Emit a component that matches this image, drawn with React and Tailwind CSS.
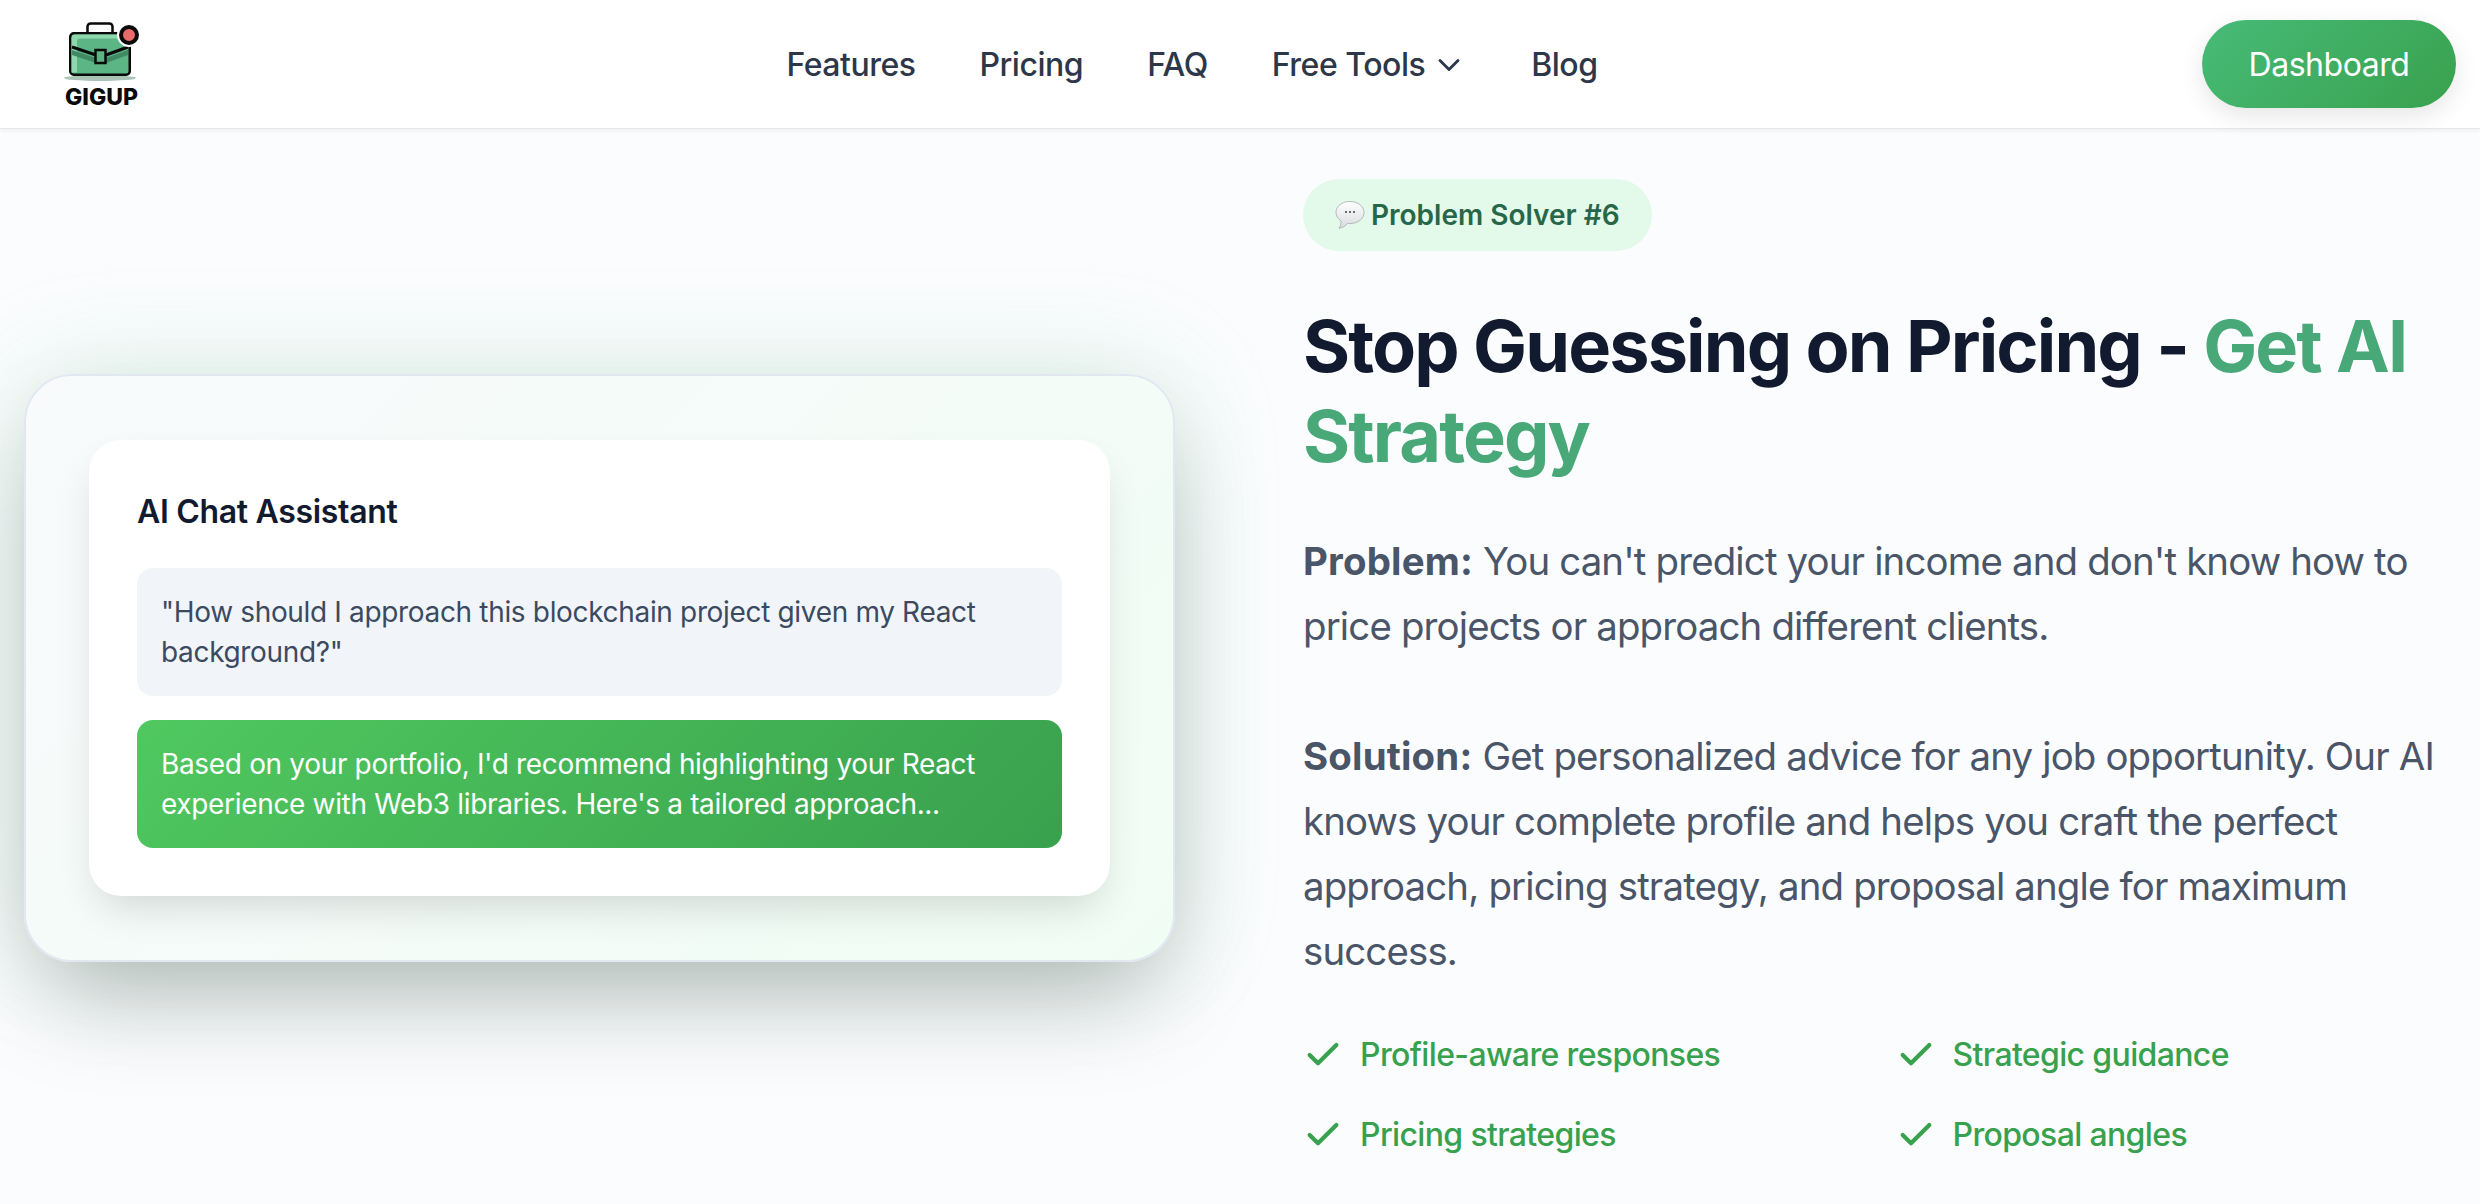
import React from "react";
import { Check, ChevronDown } from "lucide-react";

function Logo() {
  return (
    <div className="flex w-[158px] flex-col items-center pr-[3px]">
      <svg width="80" height="64" viewBox="0 0 80 64" className="block">
        <ellipse cx="38" cy="59" rx="36" ry="3" fill="#a9c4b6" />
        <rect x="25.5" y="4.5" width="25" height="12" rx="3" fill="#fff" stroke="#0a0a0a" strokeWidth="2.5" />
        <rect x="8.25" y="14.25" width="59.5" height="41.5" rx="3.5" fill="#5cb585" stroke="#0a0a0a" strokeWidth="2.5" />
        <path d="M9.5 19q0-3.5 3.5-3.5h53v4H18q-3 0-3 3v31h-5.5z" fill="#8fd8ae" />
        <path d="M10 31l24 8h10l22-8v5l-22 8H34l-24-8z" fill="#3f8a63" />
        <path d="M10 28l24 8M44 36l22-8" stroke="#0a0a0a" strokeWidth="3" fill="none" />
        <rect x="33.5" y="31" width="10" height="13" fill="#5cb585" stroke="#0a0a0a" strokeWidth="2.5" />
        <circle cx="67" cy="16" r="12" fill="#fff" />
        <circle cx="67" cy="16" r="8" fill="#e86a6a" stroke="#0a0a0a" strokeWidth="4" />
      </svg>
      <span className="mt-[1px] text-[23px] font-extrabold leading-[26px] text-[#0a0a0a]">GIGUP</span>
    </div>
  );
}

function Bubble() {
  return (
    <svg width="30" height="30" viewBox="0 0 30 30" className="mr-[6px] shrink-0">
      <defs>
        <linearGradient id="bubble" x1="0" y1="0" x2="0" y2="1">
          <stop offset="0" stopColor="#ffffff" />
          <stop offset="1" stopColor="#d9dbde" />
        </linearGradient>
      </defs>
      <path d="M15 1.5C7 1.5 1 6.3 1 12.5c0 3.5 2 6.4 5 8.4.2 2.2-.4 5-2 7.3 3.6-.3 6.8-2.4 8.6-4.9.8.1 1.6.2 2.4.2 8 0 14-4.8 14-11S23 1.5 15 1.5z" fill="url(#bubble)" stroke="#a8abb0" strokeWidth="0.8" />
      <circle cx="11" cy="12" r="1" fill="#3a3d42" />
      <circle cx="15" cy="12" r="1" fill="#3a3d42" />
      <circle cx="19" cy="12" r="1" fill="#3a3d42" />
    </svg>
  );
}

function Feature({ children }) {
  return (
    <div className="flex items-center gap-[17px] text-[32px] font-medium leading-[48px] tracking-[-0.02em] text-[#38a14d]">
      <Check size={40} strokeWidth={2.5} className="shrink-0" />
      <span>{children}</span>
    </div>
  );
}

export default function App() {
  return (
    <div className="h-[1204px] overflow-hidden bg-[#fbfcfe] font-['Inter',sans-serif]">
      <header className="flex h-[129px] items-center justify-between border-b border-[#e5e7eb] bg-white px-6 shadow-[0_2px_4px_rgba(0,0,0,0.05)]">
        <Logo />
        <nav className="flex items-center gap-16 pt-[2px] text-[32px] font-medium tracking-[-0.015em] text-[#2d3748]">
          <span>Features</span>
          <span>Pricing</span>
          <span>FAQ</span>
          <span className="flex items-center gap-[6px]">
            Free Tools
            <ChevronDown size={36} strokeWidth={1.9} />
          </span>
          <span>Blog</span>
        </nav>
        <button className="h-[88px] w-[254px] rounded-[44px] bg-[linear-gradient(135deg,#48bb78,#38a14d)] pt-[2px] text-[32px] font-normal tracking-[-0.015em] text-white shadow-[0_8px_24px_rgba(0,0,0,0.1)]">
          Dashboard
        </button>
      </header>

      <main className="grid grid-cols-[1151px_1fr] items-center gap-32 px-6 pt-[50px]">
        <section className="mb-[3px] rounded-[48px] border-2 border-[#e2e8f0] bg-[linear-gradient(135deg,#f8fafc,#f0fdf4)] px-[63px] py-16 shadow-[0_50px_100px_-20px_rgba(0,0,0,0.25),0_0_110px_rgba(72,187,120,0.2)]">
          <div className="rounded-[32px] bg-white p-12 shadow-[0_20px_40px_-10px_rgba(0,0,0,0.15)]">
            <h3 className="mb-8 text-[32px] font-semibold leading-[48px] tracking-[-0.01em] text-[#111a2e]">AI Chat Assistant</h3>
            <div className="rounded-2xl bg-[#f1f5f9] p-6 text-[28px] leading-10 tracking-[-0.012em] text-[#3b4a60]">
              "How should I approach this blockchain project given my React background?"
            </div>
            <div className="mt-6 rounded-2xl bg-[linear-gradient(135deg,#50c85f,#38a14d)] p-6 text-[28px] leading-10 tracking-[-0.012em] text-white">
              Based on your portfolio, I'd recommend highlighting your React experience with Web3 libraries. Here's a tailored approach...
            </div>
          </div>
        </section>

        <section>
          <div className="inline-flex h-[72px] items-center rounded-[36px] bg-[#e3f9e9] px-8 text-[28px] font-semibold text-[#276749]">
            <Bubble />
            Problem Solver #6
          </div>
          <h1 className="mt-[50px] text-[72px] font-bold leading-[90px] tracking-[-0.026em] text-[#111a2e]">
            Stop Guessing on Pricing - <span className="text-[#48a878]">Get AI Strategy</span>
          </h1>
          <p className="mt-12 text-[38.4px] leading-[65px] tracking-[-0.022em] text-[#4a5568]">
            <strong className="font-bold tracking-[0.005em]">Problem:</strong> You can't predict your income and don't know how to price projects or approach different clients.
            <br />
            <br />
            <strong className="font-bold tracking-[0.005em]">Solution:</strong> Get personalized advice for any job opportunity. Our AI knows your complete profile and helps you craft the perfect approach, pricing strategy, and proposal angle for maximum success.
          </p>
          <div className="mt-[47px] grid grid-cols-2 gap-8">
            <Feature>Profile-aware responses</Feature>
            <Feature>Strategic guidance</Feature>
            <Feature>Pricing strategies</Feature>
            <Feature>Proposal angles</Feature>
          </div>
        </section>
      </main>
    </div>
  );
}
